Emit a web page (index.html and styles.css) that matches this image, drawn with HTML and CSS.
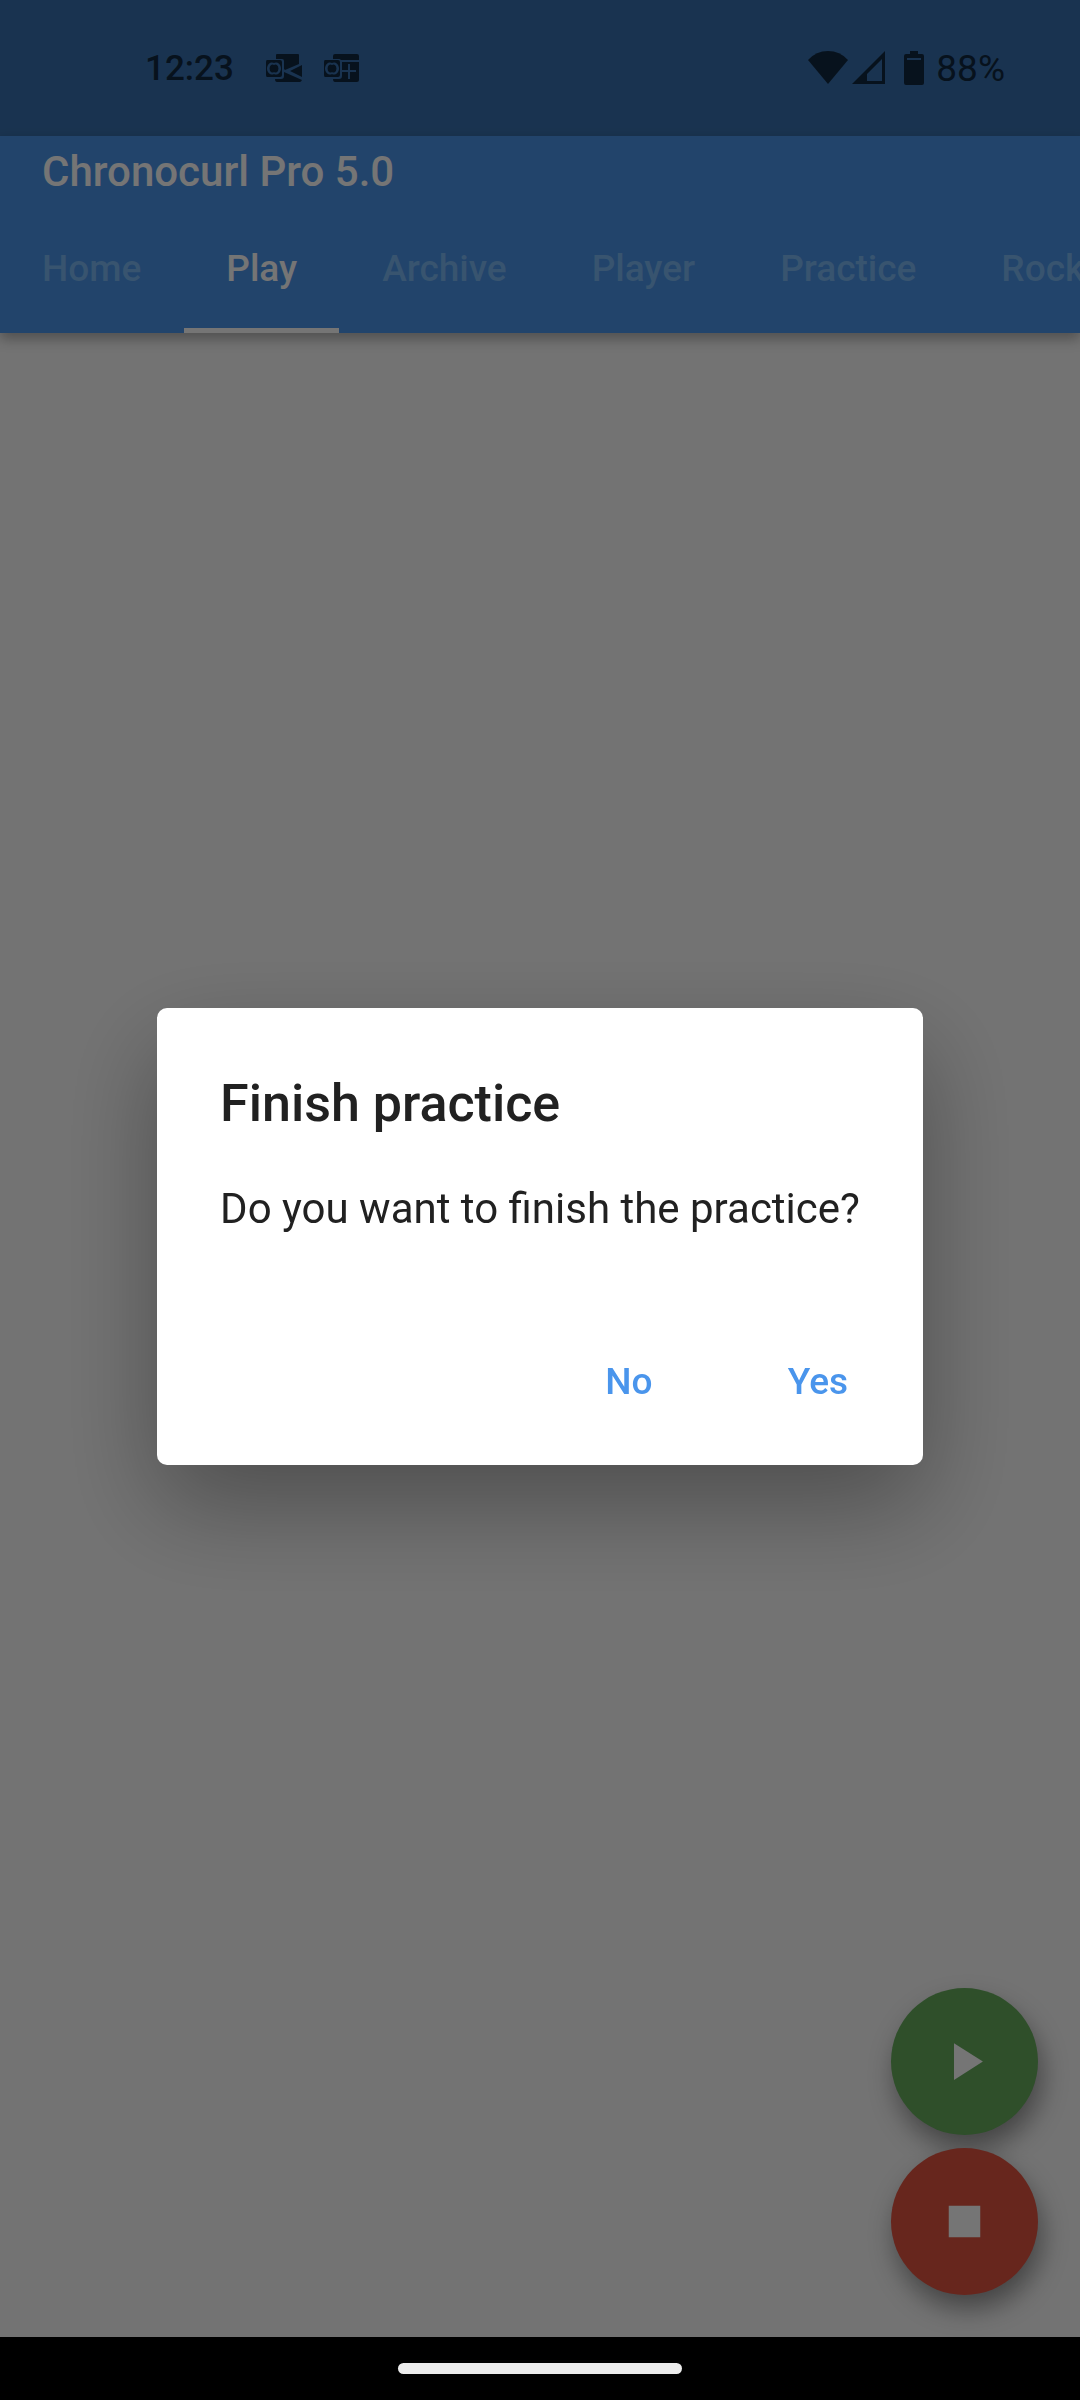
FILE: index.html
```html
<!DOCTYPE html>
<html lang="en">

<head>
    <meta charset="UTF-8">
    <meta name="viewport" content="width=device-width, initial-scale=1.0">
    <title>Chronocurl Pro 5.0</title>
    <link rel="stylesheet" href="styles.css">
</head>

<body>
    <div class="status-bar">
        <span class="clock">12:23</span>
        <div class="notifications">
            <!-- Outlook mail -->
            <svg width="38" height="30" viewBox="0 0 38 30">
                <path d="M12 1h21q1 0 1 1v9l-14 6-1-1V8q0-2-2-2h-6V2q0-1 1-1z" />
                <path d="M37 12v12l-12-6z" />
                <path d="M10 26h6q3 0 3-3v-4l18 8q-1 2-2 2H12q-2 0-2-3z" />
                <path fill-rule="evenodd" d="M2 7h13q2 0 2 2v13q0 2-2 2H2q-1 0-1-2V9q0-2 1-2zM9 10a5 6 0 1 0 0 11a5 6 0 1 0 0-11zM9 12a3 4 0 1 1 0 7a3 4 0 1 1 0-7z" />
            </svg>
            <!-- Outlook calendar -->
            <svg width="38" height="30" viewBox="0 0 38 30">
                <path d="M12 1h22q2 0 2 2v4H18q-1-1-2-1h-6V3q0-2 2-2z" />
                <path fill-rule="evenodd" d="M19 9h17v18q0 2-2 2H12q-2 0-2-3h6q3 0 3-3zM25 11v6h-6v2h6v7h2v-7h6v-2h-6v-6z" />
                <path fill-rule="evenodd" d="M2 7h13q2 0 2 2v13q0 2-2 2H2q-1 0-1-2V9q0-2 1-2zM9 10a5 6 0 1 0 0 11a5 6 0 1 0 0-11zM9 12a3 4 0 1 1 0 7a3 4 0 1 1 0-7z" />
            </svg>
        </div>
        <div class="system">
            <svg width="40" height="34" viewBox="0 0 40 34">
                <path d="M0 9Q8 0 20 0t20 9L20 33z" />
            </svg>
            <svg width="34" height="34" viewBox="0 0 34 34">
                <path fill-rule="evenodd" d="M33 0v33H0zM30 8L15 23v7h15z" />
            </svg>
            <svg class="battery" width="20" height="34" viewBox="0 0 20 34">
                <path fill-rule="evenodd" d="M6 0h8v3h4q2 0 2 2v27q0 2-2 2H2q-2 0-2-2V5q0-2 2-2h4zM3 7v2h14V7z" />
            </svg>
            <span>88%</span>
        </div>
    </div>

    <header class="app-bar">
        <h1>Chronocurl Pro 5.0</h1>
        <nav class="tabs">
            <a href="#home">Home</a>
            <a href="#play" class="active">Play</a>
            <a href="#archive">Archive</a>
            <a href="#player">Player</a>
            <a href="#practice">Practice</a>
            <a href="#rocks">Rocks</a>
        </nav>
    </header>

    <main class="content">
        <button type="button" class="fab play" aria-label="Start">
            <svg width="63" height="63" viewBox="0 0 24 24"><path d="M8 5v14l11-7z" /></svg>
        </button>
        <button type="button" class="fab stop" aria-label="Stop">
            <svg width="63" height="63" viewBox="0 0 24 24"><path d="M6 6h12v12H6z" /></svg>
        </button>
    </main>

    <footer class="gesture-bar">
        <div class="handle"></div>
    </footer>

    <div class="scrim">
        <div class="dialog" role="dialog" aria-labelledby="dialogTitle">
            <h2 id="dialogTitle">Finish practice</h2>
            <p>Do you want to finish the practice?</p>
            <div class="actions">
                <button type="button">No</button>
                <button type="button">Yes</button>
            </div>
        </div>
    </div>
</body>

</html>
```
FILE: styles.css
```css
* {
    box-sizing: border-box;
}

body {
    font-family: Roboto, sans-serif;
    background-color: #fafafa;
    display: flex;
    flex-direction: column;
    min-height: 100vh;
    margin: 0;
    overflow-x: hidden;
}

button {
    border: none;
    font-family: inherit;
    cursor: pointer;
}

/* Status bar */
.status-bar {
    display: flex;
    align-items: center;
    height: 136px;
    padding: 0 75px 0 145px;
    background-color: #3870ae;
    color: #112941;
    font-size: 35px;
    font-weight: 500;
}

.status-bar svg {
    display: block;
    fill: currentColor;
}

.notifications {
    display: flex;
    gap: 20px;
    margin-left: 31px;
}

.system {
    display: flex;
    align-items: center;
    gap: 4px;
    margin-left: auto;
    font-size: 37px;
    font-weight: 400;
}

.system .battery {
    margin: 0 8px 0 14px;
}

/* App bar */
.app-bar {
    position: relative;
    background-color: #4a94ea;
    box-shadow: 0 6px 12px rgba(0, 0, 0, 0.3);
}

h1 {
    margin: 0;
    padding: 11px 42px 10px;
    color: white;
    font-size: 42px;
    font-weight: 500;
    line-height: 50px;
}

.tabs {
    display: flex;
    gap: 1px;
    overflow: hidden;
}

.tabs a {
    flex: none;
    height: 126px;
    padding: 0 42px;
    border-bottom: 5px solid transparent;
    color: #7ab7f1;
    font-size: 37px;
    font-weight: 500;
    line-height: 124px;
    text-decoration: none;
}

.tabs .active {
    color: white;
    border-bottom-color: white;
}

/* Floating buttons */
.content {
    flex: 1;
    display: flex;
    flex-direction: column;
    align-items: flex-end;
    justify-content: flex-end;
    gap: 13px;
    padding: 42px;
}

.fab {
    display: flex;
    align-items: center;
    justify-content: center;
    width: 147px;
    height: 147px;
    padding: 0;
    border-radius: 50%;
    box-shadow: 4px 14px 26px rgba(0, 0, 0, 0.4);
}

.fab svg {
    fill: white;
}

.play {
    background-color: #66ac5d;
}

.stop {
    background-color: #e05341;
}

/* System navigation */
.gesture-bar {
    position: relative;
    z-index: 2;
    display: flex;
    align-items: center;
    justify-content: center;
    height: 63px;
    background-color: black;
}

.handle {
    width: 284px;
    height: 11px;
    border-radius: 6px;
    background-color: #ececec;
}

/* Dialog */
.scrim {
    position: fixed;
    inset: 0;
    z-index: 1;
    display: flex;
    align-items: center;
    justify-content: center;
    padding: 136px 42px 63px;
    background-color: rgba(0, 0, 0, 0.54);
}

.dialog {
    padding: 64px 21px 21px 63px;
    border-radius: 10px;
    background-color: white;
    color: #212121;
    box-shadow: 0 40px 100px rgba(0, 0, 0, 0.32);
}

.dialog h2 {
    margin: 0;
    font-size: 52px;
    font-weight: 500;
    line-height: 64px;
}

.dialog p {
    margin: 41px 42px 63px 0;
    font-size: 42px;
    line-height: 64px;
}

.actions {
    display: flex;
    justify-content: flex-end;
    gap: 21px;
    padding: 21px 0 7px;
}

.actions button {
    min-width: 168px;
    height: 112px;
    background: none;
    color: #4a95ec;
    font-size: 37px;
    font-weight: 500;
}
```
